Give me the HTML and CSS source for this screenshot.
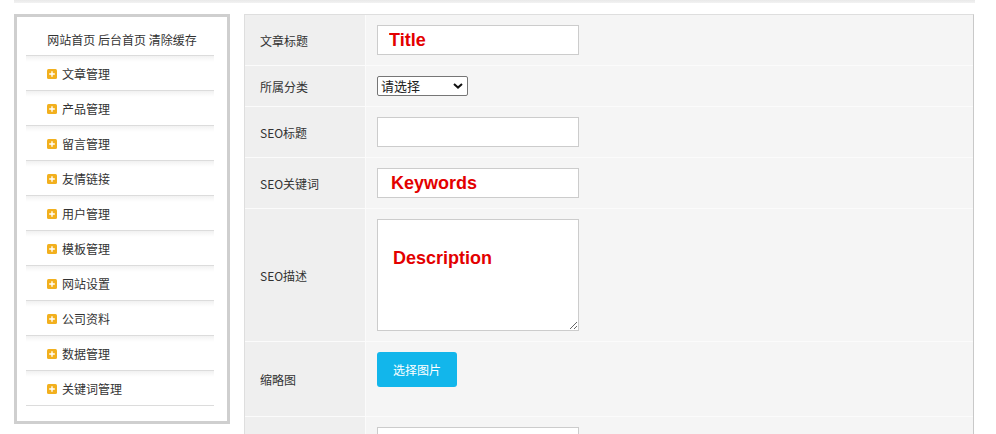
FILE: index.html
```html
<!DOCTYPE html>
<html lang="zh-CN">
<head>
<meta charset="utf-8">
<title>后台管理</title>
<link rel="stylesheet" href="styles.css">
</head>
<body>
<div class="topstrip"></div>
<div class="page">
  <aside class="sidebar">
    <div class="side-head">网站首页 后台首页 清除缓存</div>
    <ul class="menu">
      <li><svg class="ico" viewBox="0 0 10 10"><rect width="10" height="10" rx="1.5" fill="#f2b01e"/><path d="M5 2.2v5.6M2.2 5h5.6" stroke="#fff" stroke-width="1.4"/></svg>文章管理</li>
      <li><svg class="ico" viewBox="0 0 10 10"><rect width="10" height="10" rx="1.5" fill="#f2b01e"/><path d="M5 2.2v5.6M2.2 5h5.6" stroke="#fff" stroke-width="1.4"/></svg>产品管理</li>
      <li><svg class="ico" viewBox="0 0 10 10"><rect width="10" height="10" rx="1.5" fill="#f2b01e"/><path d="M5 2.2v5.6M2.2 5h5.6" stroke="#fff" stroke-width="1.4"/></svg>留言管理</li>
      <li><svg class="ico" viewBox="0 0 10 10"><rect width="10" height="10" rx="1.5" fill="#f2b01e"/><path d="M5 2.2v5.6M2.2 5h5.6" stroke="#fff" stroke-width="1.4"/></svg>友情链接</li>
      <li><svg class="ico" viewBox="0 0 10 10"><rect width="10" height="10" rx="1.5" fill="#f2b01e"/><path d="M5 2.2v5.6M2.2 5h5.6" stroke="#fff" stroke-width="1.4"/></svg>用户管理</li>
      <li><svg class="ico" viewBox="0 0 10 10"><rect width="10" height="10" rx="1.5" fill="#f2b01e"/><path d="M5 2.2v5.6M2.2 5h5.6" stroke="#fff" stroke-width="1.4"/></svg>模板管理</li>
      <li><svg class="ico" viewBox="0 0 10 10"><rect width="10" height="10" rx="1.5" fill="#f2b01e"/><path d="M5 2.2v5.6M2.2 5h5.6" stroke="#fff" stroke-width="1.4"/></svg>网站设置</li>
      <li><svg class="ico" viewBox="0 0 10 10"><rect width="10" height="10" rx="1.5" fill="#f2b01e"/><path d="M5 2.2v5.6M2.2 5h5.6" stroke="#fff" stroke-width="1.4"/></svg>公司资料</li>
      <li><svg class="ico" viewBox="0 0 10 10"><rect width="10" height="10" rx="1.5" fill="#f2b01e"/><path d="M5 2.2v5.6M2.2 5h5.6" stroke="#fff" stroke-width="1.4"/></svg>数据管理</li>
      <li><svg class="ico" viewBox="0 0 10 10"><rect width="10" height="10" rx="1.5" fill="#f2b01e"/><path d="M5 2.2v5.6M2.2 5h5.6" stroke="#fff" stroke-width="1.4"/></svg>关键词管理</li>
    </ul>
  </aside>
  <main class="form">
    <div class="label">文章标题</div>
    <div class="value"><input class="text in-title" type="text" value="Title"></div>
    <div class="label">所属分类</div>
    <div class="value"><select class="sel"><option>请选择</option></select></div>
    <div class="label">SEO标题</div>
    <div class="value"><input class="text" type="text" value=""></div>
    <div class="label">SEO关键词</div>
    <div class="value"><input class="text in-kw" type="text" value="Keywords"></div>
    <div class="label">SEO描述</div>
    <div class="value"><textarea class="area">Description</textarea></div>
    <div class="label">缩略图</div>
    <div class="value value-pic"><button class="btn" type="button">选择图片</button></div>
    <div class="label"></div>
    <div class="value value-tall"><input class="text" type="text" value=""></div>
  </main>
</div>
</body>
</html>
```
FILE: styles.css
```css
html, body {
  margin: 0;
  padding: 0;
  background: #fff;
  font-family: "Microsoft YaHei", "Noto Sans CJK SC", sans-serif;
  color: #333;
  overflow: hidden;
}

.topstrip {
  margin-left: 14px;
  width: 961px;
  height: 3px;
  background: linear-gradient(#e9e9e9, #f2f2f2);
}

.page {
  display: flex;
  align-items: flex-start;
  gap: 14px;
  padding: 11px 0 0 14px;
}

.sidebar {
  flex: none;
  width: 216px;
  height: 410px;
  box-sizing: border-box;
  border: 3px solid #cfcfcf;
  background: #fff;
  padding: 0 13px 0 9px;
}

.side-head {
  height: 30px;
  padding: 8px 0 0 4px;
  line-height: 30px;
  font-size: 12px;
  text-align: center;
  border-bottom: 1px solid #dcdcdc;
  white-space: nowrap;
}

.menu {
  list-style: none;
  margin: 0;
  padding: 0;
}

.menu li {
  display: flex;
  align-items: center;
  gap: 5px;
  height: 33px;
  padding: 1px 0 0 21px;
  font-size: 12px;
  line-height: 33px;
  border-bottom: 1px solid #dcdcdc;
  background: linear-gradient(#f1f1f1, #fbfbfb 4px, #fff 6px);
}

.ico {
  width: 10px;
  height: 10px;
  flex: none;
}

.form {
  flex: none;
  width: 730px;
  box-sizing: border-box;
  border: 1px solid #dedede;
  border-right-color: #c9c9c9;
  border-bottom: none;
  display: grid;
  grid-template-columns: 120px 1fr;
  gap: 1px;
  background: #fbfbfb;
}

.label {
  background: #efefef;
  padding-left: 15px;
  display: flex;
  align-items: center;
  font-size: 12px;
  color: #333;
}

.value {
  background: #f5f5f5;
  padding: 10px 10px 10px 11px;
  display: flex;
  align-items: flex-start;
}

.value-pic {
  padding-bottom: 29px;
}

.value-tall {
  height: 200px;
}

.text {
  box-sizing: border-box;
  width: 202px;
  height: 30px;
  margin: 0;
  border: 1px solid #cccccc;
  background: #fff;
  padding: 0 0 0 11px;
  font-family: "Liberation Sans", Arial, sans-serif;
  font-weight: bold;
  font-size: 18px;
  color: #e30000;
  outline: none;
}

.in-kw {
  padding-left: 13px;
}

.sel {
  -webkit-appearance: none;
  appearance: none;
  box-sizing: border-box;
  width: 91px;
  height: 20px;
  margin: 0;
  font-family: "Microsoft YaHei", "Noto Sans CJK SC", sans-serif;
  font-size: 13px;
  line-height: 17px;
  color: #222;
  border: 1px solid #767676;
  border-radius: 2px;
  padding: 0 0 1px 3px;
  background: #fff url("data:image/svg+xml;utf8,<svg xmlns='http://www.w3.org/2000/svg' width='10' height='6' viewBox='0 0 10 6'><path d='M1 1l4 3.6L9 1' fill='none' stroke='%23111' stroke-width='2'/></svg>") no-repeat right 4px center;
  background-size: 10px 6px;
}

.area {
  box-sizing: border-box;
  width: 202px;
  height: 112px;
  margin: 0;
  border: 1px solid #cccccc;
  background: #fff;
  padding: 28px 10px 0 15px;
  font-family: "Liberation Sans", Arial, sans-serif;
  font-weight: bold;
  font-size: 18px;
  line-height: 21px;
  color: #e30000;
  outline: none;
}

.btn {
  width: 80px;
  height: 35px;
  margin: 0;
  border: none;
  border-radius: 3px;
  background: #12b6eb;
  color: #fff;
  font-family: "Microsoft YaHei", "Noto Sans CJK SC", sans-serif;
  font-size: 12px;
  padding: 0;
}
```
